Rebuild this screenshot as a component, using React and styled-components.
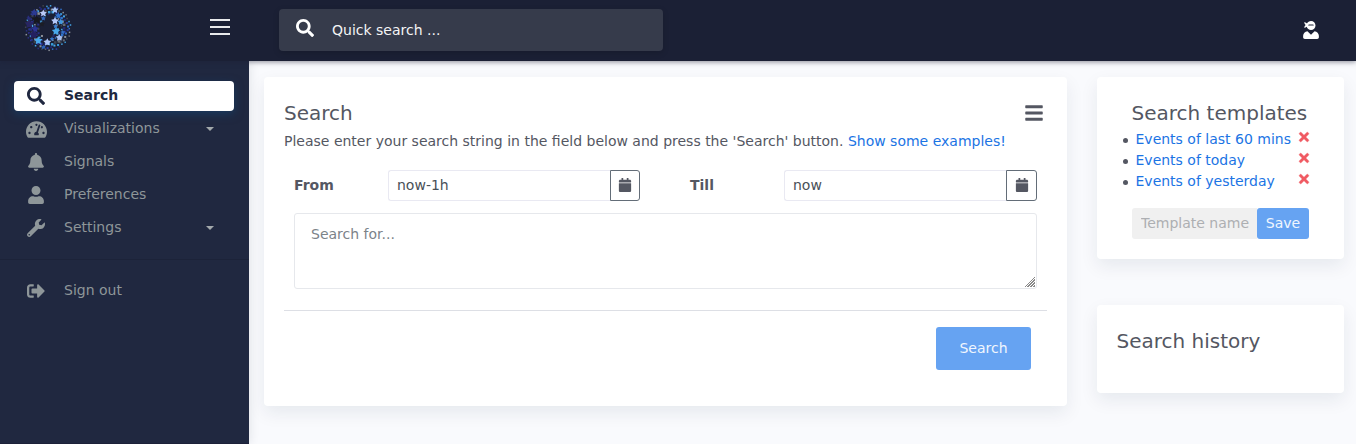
import React from "react";
import styled, { createGlobalStyle } from "styled-components";
import {
  FaSearch,
  FaTachometerAlt,
  FaBell,
  FaUser,
  FaWrench,
  FaSignOutAlt,
  FaCalendar,
  FaBars,
  FaTimes,
  FaUserNinja,
} from "react-icons/fa";

const GlobalStyle = createGlobalStyle`
  *, *::before, *::after { box-sizing: border-box; }
  body {
    margin: 0;
    background: #f9fafd;
    color: #545762;
    font-family: "DejaVu Sans", sans-serif;
    font-size: 14px;
    line-height: 21px;
    overflow: hidden;
  }
  svg { display: block; flex: none; }
`;

const Page = styled.div`
  display: flex;
  flex-direction: column;
  height: 444px;
`;

const TopBar = styled.header`
  position: relative;
  z-index: 2;
  display: flex;
  align-items: center;
  flex: none;
  height: 61px;
  background: #1b2035;
  box-shadow: 0 1px 5px rgba(27, 32, 53, 0.5);
`;

const Brand = styled.div`
  display: flex;
  justify-content: space-between;
  width: 249px;
  height: 61px;
  padding: 4px 19px 0 24px;
`;

const MenuToggle = styled.button`
  display: flex;
  flex-direction: column;
  gap: 5px;
  width: 20px;
  margin-top: 15px;
  padding: 0;
  border: 0;
  background: none;
`;

const ToggleLine = styled.span`
  height: 2px;
  background: #e9eaec;
`;

const QuickSearch = styled.label`
  display: flex;
  align-items: center;
  width: 384px;
  height: 42px;
  margin: 0 0 2px 30px;
  padding: 0 17px;
  gap: 18px;
  border-radius: 4px;
  background: #363b4b;
  color: #fff;
  box-shadow: 0 2px 6px rgba(0, 0, 0, 0.15);
  svg { margin-top: -4px; }
`;

const QuickInput = styled.input`
  flex: 1;
  min-width: 0;
  padding: 1px 0 0;
  border: 0;
  outline: 0;
  background: none;
  color: #fff;
  font: inherit;
  &::placeholder { color: #fff; opacity: 0.95; }
`;

const Account = styled.div`
  margin: 0 36.5px 1px auto;
  color: #fff;
`;

const Body = styled.div`
  display: flex;
  flex: 1;
  min-height: 0;
`;

const Sidebar = styled.nav`
  display: flex;
  flex-direction: column;
  width: 249px;
  padding-top: 20px;
  border-bottom: 1px solid #1c2139;
  background: #202840;
  box-shadow: 0 0 10px rgba(27, 32, 53, 0.12);
`;

const NavItem = styled.a`
  display: flex;
  align-items: center;
  height: 30px;
  margin: 0 15px 3px 14px;
  padding-right: 20px;
  border-radius: 4px;
  color: ${(p) => (p.$active ? "#202840" : "#8e9699")};
  background: ${(p) => (p.$active ? "#fff" : "transparent")};
  font-weight: ${(p) => (p.$active ? 700 : 400)};
  box-shadow: ${(p) => (p.$active ? "0 3px 10px 0 rgba(15, 75, 125, 0.5)" : "none")};
`;

const NavIcon = styled.span`
  display: flex;
  justify-content: center;
  width: 44.5px;
`;

const NavLabel = styled.span`
  flex: 1;
  margin: -2px 0 0 5.5px;
`;

const Caret = styled.span`
  border: 4px solid transparent;
  border-top-color: #a3a9ac;
  border-bottom: 0;
`;

const NavDivider = styled.div`
  height: 1px;
  margin: 13px 0 16px;
  background: #1c2339;
`;

const Content = styled.main`
  display: flex;
  align-items: flex-start;
  gap: 30px;
  padding: 16px 12px 0 15px;
  flex: 1;
`;

const Card = styled.section`
  border-radius: 4px;
  background: #fff;
  box-shadow: 0 7px 18px rgba(18, 38, 63, 0.08);
`;

const SearchCard = styled(Card)`
  width: 803px;
  height: 329px;
  padding: 24px 20px 0;
`;

const TemplatesCard = styled(Card)`
  height: 182px;
  padding: 24px 35px 0;
`;

const HistoryCard = styled(Card)`
  height: 88px;
  padding: 24px 19.5px 0;
`;

const Side = styled.aside`
  display: flex;
  flex-direction: column;
  gap: 46px;
  width: 247px;
`;

const CardHead = styled.div`
  display: flex;
  align-items: center;
  justify-content: space-between;
  padding-right: 3px;
`;

const Title = styled.h1`
  margin: 0 0 0 ${(p) => p.$shift || 0}px;
  color: #545762;
  font-size: 20px;
  font-weight: 400;
  line-height: 24px;
  white-space: nowrap;
`;

const Intro = styled.p`
  margin: 6px 0 18px;
  white-space: nowrap;
`;

const Link = styled.a`
  color: #1b74e4;
  text-decoration: none;
`;

const DateRow = styled.div`
  display: flex;
  padding: 0 10px;
  gap: 50px;
`;

const DateField = styled.div`
  display: flex;
  align-items: center;
  width: ${(p) => p.$width}px;
`;

const FieldLabel = styled.label`
  width: 94px;
  font-weight: 700;
`;

const DateInput = styled.input`
  flex: 1;
  min-width: 0;
  height: 31px;
  padding: 0 8px 2px;
  border: 1px solid #e9e9f2;
  border-right: 0;
  border-radius: 3px 0 0 3px;
  outline: 0;
  color: #495057;
  font: inherit;
`;

const DateButton = styled.button`
  display: flex;
  align-items: center;
  justify-content: center;
  width: ${(p) => p.$width}px;
  height: 31px;
  padding: 0 0 1px;
  border: 1px solid #636d78;
  border-radius: 0 3px 3px 0;
  background: #fff;
  color: #545762;
`;

const Query = styled.textarea`
  display: block;
  width: 743px;
  height: 76px;
  margin: 12px 10px 0;
  padding: 10px 16px;
  border: 1px solid #e6e8ec;
  border-radius: 3px;
  outline: 0;
  resize: vertical;
  font: inherit;
  &::placeholder { color: #7c8389; }
  &::-webkit-resizer {
    background:
      linear-gradient(135deg, #fff 50%, transparent 50%) right 1px bottom 1px / 10px 10px no-repeat,
      repeating-linear-gradient(135deg, #8a8a8a 0 0.8px, #fff 1.2px 2.12px) right 1px bottom 1px / 10px 10px no-repeat;
  }
`;

const Rule = styled.hr`
  height: 1px;
  margin: 21px 0 16px;
  border: 0;
  background: #dddfe5;
`;

const Actions = styled.div`
  display: flex;
  justify-content: flex-end;
  padding-right: 16px;
`;

const Button = styled.button`
  width: ${(p) => p.$width}px;
  height: ${(p) => p.$height}px;
  padding: 0;
  border: 0;
  border-radius: 3px;
  background: #66a3f2;
  color: #f0f6fe;
  font: inherit;
`;

const TemplateList = styled.ul`
  margin: 4px 0 16px;
  padding: 0 0 0 3.5px;
  list-style: none;
`;

const TemplateItem = styled.li`
  display: flex;
  align-items: center;
  height: 21px;
  margin-left: -13px;
  white-space: nowrap;
`;

const Bullet = styled.span`
  width: 5px;
  height: 5px;
  margin: 1px 7.5px 0 0.5px;
  border-radius: 50%;
  background: #545762;
`;

const Remove = styled.span`
  margin: -6px -2px 0 auto;
  color: #f05a62;
  svg { stroke: currentColor; stroke-width: 14px; }
`;

const SaveRow = styled.div`
  display: flex;
`;

const TemplateInput = styled.input`
  width: 125px;
  height: 31px;
  padding: 0 0 2px 9px;
  border: 0;
  border-radius: 3px 0 0 3px;
  background: #f0f0f0;
  font: inherit;
  &::placeholder { color: #adafb2; }
`;

const BIG_STARS = [
  [10.3, 8.7, 4, "#2b3a92"],
  [19.3, 9.3, 3.7, "#b9c9f7"],
  [31, 6, 3.7, "#a9c5f8"],
  [34.3, 11.6, 3.5, "#3272cc"],
  [12.6, 15.7, 5, "#17181f"],
  [18, 20, 3, "#1c1d24"],
  [31, 17, 4, "#b3c8f8"],
  [36.7, 18, 3.3, "#4298df"],
  [5.3, 20, 5, "#282562"],
  [11, 25, 4, "#2b3393"],
  [9.3, 30.7, 5, "#242060"],
  [32, 27.3, 4.4, "#49a8ea"],
  [14.3, 36.7, 4.4, "#49a8ea"],
  [23.3, 38.3, 4, "#afc5f8"],
  [35.3, 33.7, 3.8, "#a5bff2"],
  [19.3, 43.3, 2.4, "#2b62bb"],
  [19.3, 14.3, 2.6, "#3269bd"],
  [4.7, 14.3, 2.4, "#292e7b"],
  [38.7, 28.3, 2.4, "#326fc2"],
  [28, 35, 2.4, "#3777cb"],
  [31.5, 22.3, 2.4, "#3b83d6"],
];

const DOT_COLORS = ["#3272cc", "#45a6e8", "#666972", "#2b3aa0", "#3a9bd8", "#8c9098", "#242874", "#41454f"];
const RINGS = [
  [22, 38, 0.2],
  [19.4, 34, 0.6],
  [16.5, 29, 0.1],
  [13.2, 23, 0.4],
  [10, 15, 0.3],
];

const DOTS = RINGS.flatMap(([radius, count, phase], ring) =>
  Array.from({ length: count }, (_, i) => {
    const angle = ((i + phase) / count) * Math.PI * 2;
    const wobble = (((i * 7 + ring * 3) % 5) - 2) * 0.35;
    const left = Math.cos(angle) < -0.35;
    const hue = (i * 5 + ring * 3) % 8;
    return {
      x: 24 + Math.cos(angle) * (radius + wobble),
      y: 24 + Math.sin(angle) * (radius + wobble),
      size: 1.5 + ((i * 3 + ring) % 3) * 0.5,
      color: left && hue % 2 === 0 ? "#292e80" : DOT_COLORS[hue],
    };
  })
).filter((d) => !(d.x > 21 && d.x < 28.5 && d.y > 12 && d.y < 35));

const starPoints = (cx, cy, r) =>
  Array.from({ length: 10 }, (_, i) => {
    const angle = -Math.PI / 2 + (i * Math.PI) / 5;
    const d = i % 2 ? r * 0.52 : r;
    return `${(cx + Math.cos(angle) * d).toFixed(2)},${(cy + Math.sin(angle) * d).toFixed(2)}`;
  }).join(" ");

function Logo() {
  return (
    <svg width="48" height="48" viewBox="0 0 48 48" aria-hidden="true">
      {DOTS.map((d, i) => (
        <rect key={i} x={d.x - d.size / 2} y={d.y - d.size / 2} width={d.size} height={d.size} fill={d.color} />
      ))}
      {BIG_STARS.map(([x, y, r, fill], i) => (
        <polygon key={i} points={starPoints(x, y, r)} fill={fill} />
      ))}
    </svg>
  );
}

const NAV = [
  { label: "Search", Icon: FaSearch, active: true },
  { label: "Visualizations", Icon: FaTachometerAlt, size: 21, caret: true },
  { label: "Signals", Icon: FaBell },
  { label: "Preferences", Icon: FaUser },
  { label: "Settings", Icon: FaWrench, caret: true },
];

const TEMPLATES = ["Events of last 60 mins", "Events of today", "Events of yesterday"];

function NavEntry({ label, Icon, active, size = 18, caret }) {
  return (
    <NavItem $active={active}>
      <NavIcon>
        <Icon size={size} />
      </NavIcon>
      <NavLabel>{label}</NavLabel>
      {caret && <Caret />}
    </NavItem>
  );
}

function DatePicker({ label, value, width, buttonWidth }) {
  return (
    <DateField $width={width}>
      <FieldLabel>{label}</FieldLabel>
      <DateInput defaultValue={value} />
      <DateButton $width={buttonWidth} aria-label={`Pick ${label}`}>
        <FaCalendar size={14} />
      </DateButton>
    </DateField>
  );
}

export default function App() {
  return (
    <Page>
      <GlobalStyle />
      <TopBar>
        <Brand>
          <Logo />
          <MenuToggle aria-label="Menu">
            <ToggleLine />
            <ToggleLine />
            <ToggleLine />
          </MenuToggle>
        </Brand>
        <QuickSearch>
          <FaSearch size={18} />
          <QuickInput placeholder="Quick search ..." />
        </QuickSearch>
        <Account>
          <FaUserNinja size={18} />
        </Account>
      </TopBar>
      <Body>
        <Sidebar>
          {NAV.map((item) => (
            <NavEntry key={item.label} {...item} />
          ))}
          <NavDivider />
          <NavEntry label="Sign out" Icon={FaSignOutAlt} />
        </Sidebar>
        <Content>
          <SearchCard>
            <CardHead>
              <Title>Search</Title>
              <FaBars size={20} />
            </CardHead>
            <Intro>
              Please enter your search string in the field below and press the 'Search' button.{" "}
              <Link>Show some examples!</Link>
            </Intro>
            <DateRow>
              <DatePicker label="From" value="now-1h" width={346} buttonWidth={30} />
              <DatePicker label="Till" value="now" width={347} buttonWidth={31} />
            </DateRow>
            <Query placeholder="Search for..." />
            <Rule />
            <Actions>
              <Button $width={95} $height={43}>Search</Button>
            </Actions>
          </SearchCard>
          <Side>
            <TemplatesCard>
              <Title as="h2" $shift={-0.5}>Search templates</Title>
              <TemplateList>
                {TEMPLATES.map((name) => (
                  <TemplateItem key={name}>
                    <Bullet />
                    <Link>{name}</Link>
                    <Remove>
                      <FaTimes size={14} />
                    </Remove>
                  </TemplateItem>
                ))}
              </TemplateList>
              <SaveRow>
                <TemplateInput placeholder="Template name" />
                <Button $width={52} $height={31}>Save</Button>
              </SaveRow>
            </TemplatesCard>
            <HistoryCard>
              <Title as="h2">Search history</Title>
            </HistoryCard>
          </Side>
        </Content>
      </Body>
    </Page>
  );
}
